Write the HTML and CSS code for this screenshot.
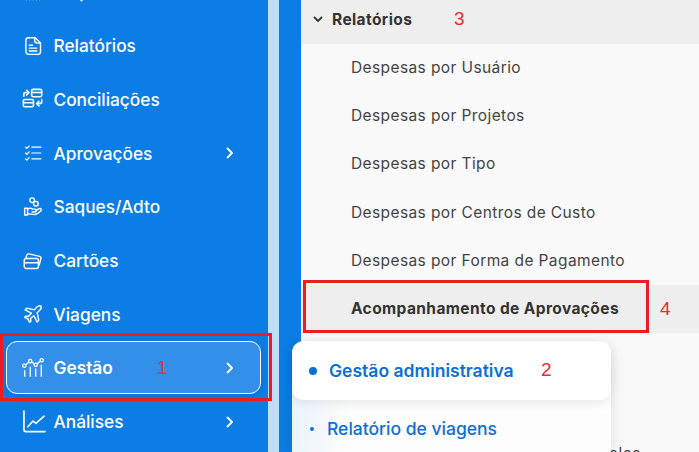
FILE: index.html
```html
<!DOCTYPE html>
<html lang="pt-BR">
  <head>
    <meta charset="UTF-8" />
    <meta name="viewport" content="width=device-width, initial-scale=1.0" />
    <title>Gestão - Relatórios</title>
    <link rel="stylesheet" href="styles.css">
  </head>

  <body>
    <div class="page">
      <aside class="sidebar">
        <ul class="nav">
          <li class="nav-item">
            <svg class="icon" viewBox="0 0 24 24"><path d="M4 19v2M8 17v4M12 19v2M16 17v4M20 19v2"/></svg>
            <span class="nav-text">Empresa</span>
          </li>
          <li class="nav-item">
            <svg class="icon" viewBox="0 0 24 24"><path d="M6.500 2h8l6.500 6.500V19a3 3 0 0 1-3 3H6.500a3 3 0 0 1-3-3V5a3 3 0 0 1 3-3z"/><path d="M14 2v3.500a3 3 0 0 0 3 3h4"/><path d="M7.500 11h4M7.500 14.500h9M7.500 18h9"/></svg>
            <span class="nav-text">Relatórios</span>
          </li>
          <li class="nav-item">
            <svg class="icon icon-wide" viewBox="0 0 24 24"><rect x="10.500" y="1.500" width="11" height="8" rx="1.500"/><path d="M10.500 5h11"/><rect x="1.500" y="12.500" width="11" height="8" rx="1.500"/><path d="M1.500 16h11"/><path d="M2 9V6.500a1.500 1.500 0 0 1 1.500-1.500H7M5 2.500 7.500 5 5 7.500"/><path d="M21.500 12.500V15a2 2 0 0 1-2 2H16M18.500 14.500 16 17l2.500 2.500"/></svg>
            <span class="nav-text">Conciliações</span>
          </li>
          <li class="nav-item">
            <svg class="icon icon-thin" viewBox="0 0 24 24"><path d="M10.500 5h11M10.500 12h11M10.500 19h11"/><path d="M3 5l1.500 1.500L7.500 3.500M3 12l1.500 1.500 3-3M3 19l1.500 1.500 3-3"/></svg>
            <span class="nav-text">Aprovações</span>
            <svg class="chevron" viewBox="0 0 12 12"><path d="M3.500 1.500 8 6l-4.500 4.500"/></svg>
          </li>
          <li class="nav-item">
            <svg class="icon" viewBox="0 0 24 24"><circle cx="11" cy="3.800" r="2.800"/><circle cx="15.500" cy="8" r="2.800"/><path d="M2 13.500h3.500v8H2z"/><path d="M5.500 14.500c2-1.500 4-1.500 6 0h3a1.500 1.500 0 0 1 0 3.500h-3.500"/><path d="M15 16.500l4.500-2.500c2-.8 3.500 1 2 2.500-2 2-5 4.500-8 4.500-3 0-5-1-8-1"/></svg>
            <span class="nav-text">Saques/Adto</span>
          </li>
          <li class="nav-item">
            <svg class="icon" viewBox="0 0 24 24"><rect x="1.500" y="9" width="17" height="12" rx="2.500"/><path d="M1.500 14h17"/><path d="M3.500 9l1-4a2 2 0 0 1 2.500-1.500l13 3a2 2 0 0 1 1.500 2.500l-2 7.500"/></svg>
            <span class="nav-text">Cartões</span>
          </li>
          <li class="nav-item">
            <svg class="icon" viewBox="0 0 24 24"><path d="M21.500 2.500c-1.500-1-3.500 0-5 1.500l-3 3-9-2-2 2 7.500 4-3.500 4-3-.5-1.500 1.500 4 2 2 4 1.500-1.500-.5-3 4-3.500 4 7.500 2-2-2-9 3-3c1.500-1.500 2.500-3.500 1.500-5z"/></svg>
            <span class="nav-text">Viagens</span>
          </li>
          <li class="nav-item active">
            <svg class="icon icon-wide icon-thin" viewBox="0 0 24 24"><circle cx="2.500" cy="9.500" r="1.800"/><circle cx="9" cy="4.500" r="1.800"/><circle cx="15" cy="8.500" r="1.800"/><circle cx="21.500" cy="3.500" r="1.800"/><path d="M4 8.400 7.500 5.700M10.600 5.500l2.900 2M16.400 7.300l3.700-2.800"/><path d="M3 15v6M9 11v10M15 13v8M21 9v12"/></svg>
            <span class="nav-text">Gestão</span>
            <svg class="chevron" viewBox="0 0 12 12"><path d="M3.500 1.500 8 6l-4.500 4.500"/></svg>
          </li>
          <li class="nav-item">
            <svg class="icon icon-big" viewBox="0 0 24 24"><path d="M1 1v19.500a2 2 0 0 0 2 2h20"/><path d="M5 17.500l5.500-6 3 2.500L22 6.500"/></svg>
            <span class="nav-text">Análises</span>
            <svg class="chevron" viewBox="0 0 12 12"><path d="M3.500 1.500 8 6l-4.500 4.500"/></svg>
          </li>
        </ul>
      </aside>
      <div class="strip"></div>
      <div class="gutter"></div>

      <main class="content">
        <div class="group-title">
          <svg class="caret" viewBox="0 0 12 12"><path d="M2 4l4 4 4-4"/></svg>
          Relatórios
        </div>
        <a class="report">Despesas por Usuário</a>
        <a class="report">Despesas por Projetos</a>
        <a class="report">Despesas por Tipo</a>
        <a class="report">Despesas por Centros de Custo</a>
        <a class="report">Despesas por Forma de Pagamento</a>
        <a class="report selected">Acompanhamento de Aprovações</a>
        <a class="report">Despesas por Categoria</a>
        <a class="report">Despesas por Período</a>
        <a class="report">Relatório de Despesas por Protocolos</a>
      </main>
    </div>

    <div class="flyout">
      <div class="flyout-active"><i class="dot"></i>Gestão administrativa</div>
      <div class="flyout-item"><i class="dot small"></i>Relatório de viagens</div>
    </div>

    <div class="mark box-1"></div>
    <div class="mark box-4"></div>
    <span class="num num-1">1</span>
    <span class="num num-2">2</span>
    <span class="num num-3">3</span>
    <span class="num num-4">4</span>
  </body>
</html>
```

FILE: styles.css
```css
* {
  margin: 0;
  padding: 0;
  box-sizing: border-box;
}

body {
  width: 699px;
  height: 452px;
  overflow: hidden;
  position: relative;
  font-family: Inter, "Liberation Sans", sans-serif;
}

.page {
  display: flex;
  height: 452px;
}

.sidebar {
  width: 268px;
  background: #0b7de4;
  flex-shrink: 0;
}
.strip {
  width: 11px;
  background: #bfddf7;
  flex-shrink: 0;
}
.gutter {
  width: 22px;
  background: #0b7de4;
  flex-shrink: 0;
}

.nav {
  list-style: none;
  margin-top: -35px;
  padding: 0 7px 0 6px;
}
.nav-item {
  display: flex;
  align-items: center;
  height: 53.75px;
  padding: 0 24px 0 16px;
  color: #fff;
  font-size: 17.3px;
  font-weight: 500;
  border: 1px solid transparent;
  border-radius: 11px;
}
.nav-item.active {
  height: 53px;
  margin-bottom: 0.75px;
  background: #348fe8;
  border-color: #fff;
  font-weight: 600;
  box-shadow: 0 2px 6px rgba(0, 0, 0, 0.1);
}
.icon {
  width: 20px;
  height: 20px;
  margin-right: 10.500px;
  flex-shrink: 0;
  fill: none;
  stroke: #fff;
  stroke-width: 1.7;
  stroke-linecap: round;
  stroke-linejoin: round;
}
.icon-thin {
  stroke-width: 1.4;
}
.icon-wide {
  width: 22px;
  height: 22px;
  margin-left: -1px;
  margin-right: 9.500px;
}
.icon-big {
  width: 23px;
  height: 23px;
  margin-right: 7.500px;
}
.nav-text {
  flex: 1;
}
.chevron {
  width: 12px;
  height: 12px;
  fill: none;
  stroke: #fff;
  stroke-width: 1.8;
  stroke-linecap: round;
  stroke-linejoin: round;
}

.content {
  flex: 1;
  background: #f9f9f9;
  overflow: hidden;
}
.group-title {
  display: flex;
  align-items: center;
  height: 44px;
  padding: 0 0 6px 11px;
  background: #eeeeee;
  color: #333;
  font-size: 15.5px;
  font-weight: 700;
  letter-spacing: 0.4px;
}
.caret {
  width: 12px;
  height: 12px;
  margin-right: 8px;
  fill: none;
  stroke: #333;
  stroke-width: 1.8;
}
.report {
  display: flex;
  align-items: center;
  height: 48.2px;
  padding: 0 0 1px 50px;
  color: #444;
  font-size: 15.5px;
  letter-spacing: 0.4px;
  white-space: nowrap;
}
.report.selected {
  background: #eeeeee;
  color: #333;
  font-weight: 700;
}

.flyout {
  position: absolute;
  left: 292px;
  top: 341px;
  width: 319px;
  height: 111px;
  background: linear-gradient(100deg, #e6f1fb 0, #fdfdfd 22%);
  border-radius: 12px 12px 0 0;
  box-shadow: 0 3px 14px rgba(0, 0, 0, 0.12);
}
.flyout-active {
  display: flex;
  align-items: center;
  height: 59px;
  padding-left: 17px;
  background: #fff;
  border-radius: 12px;
  box-shadow: 0 4px 10px rgba(0, 0, 0, 0.07);
  color: #0b6fd8;
  font-size: 17.5px;
  font-weight: 600;
}
.flyout-item {
  display: flex;
  align-items: center;
  height: 57px;
  padding-left: 18px;
  color: #0b6fd8;
  font-size: 17.5px;
  font-weight: 500;
}
.dot {
  width: 8px;
  height: 8px;
  margin-right: 12px;
  border-radius: 50%;
  background: #0b6fd8;
}
.dot.small {
  width: 4px;
  height: 4px;
  margin-right: 13px;
}

.mark {
  position: absolute;
  border: 3px solid #ec1c24;
}
.box-1 {
  left: 0;
  top: 333px;
  width: 272px;
  height: 68px;
}
.box-4 {
  left: 303px;
  top: 280px;
  width: 346px;
  height: 53px;
}
.num {
  position: absolute;
  color: #ee2a33;
  font-family: "Liberation Sans", sans-serif;
  font-size: 19px;
  line-height: 20px;
}
.num-1 {
  left: 157px;
  top: 358px;
  color: #d23a4c;
}
.num-2 {
  left: 541px;
  top: 360px;
}
.num-3 {
  left: 454px;
  top: 9px;
}
.num-4 {
  left: 660px;
  top: 299px;
}
```
